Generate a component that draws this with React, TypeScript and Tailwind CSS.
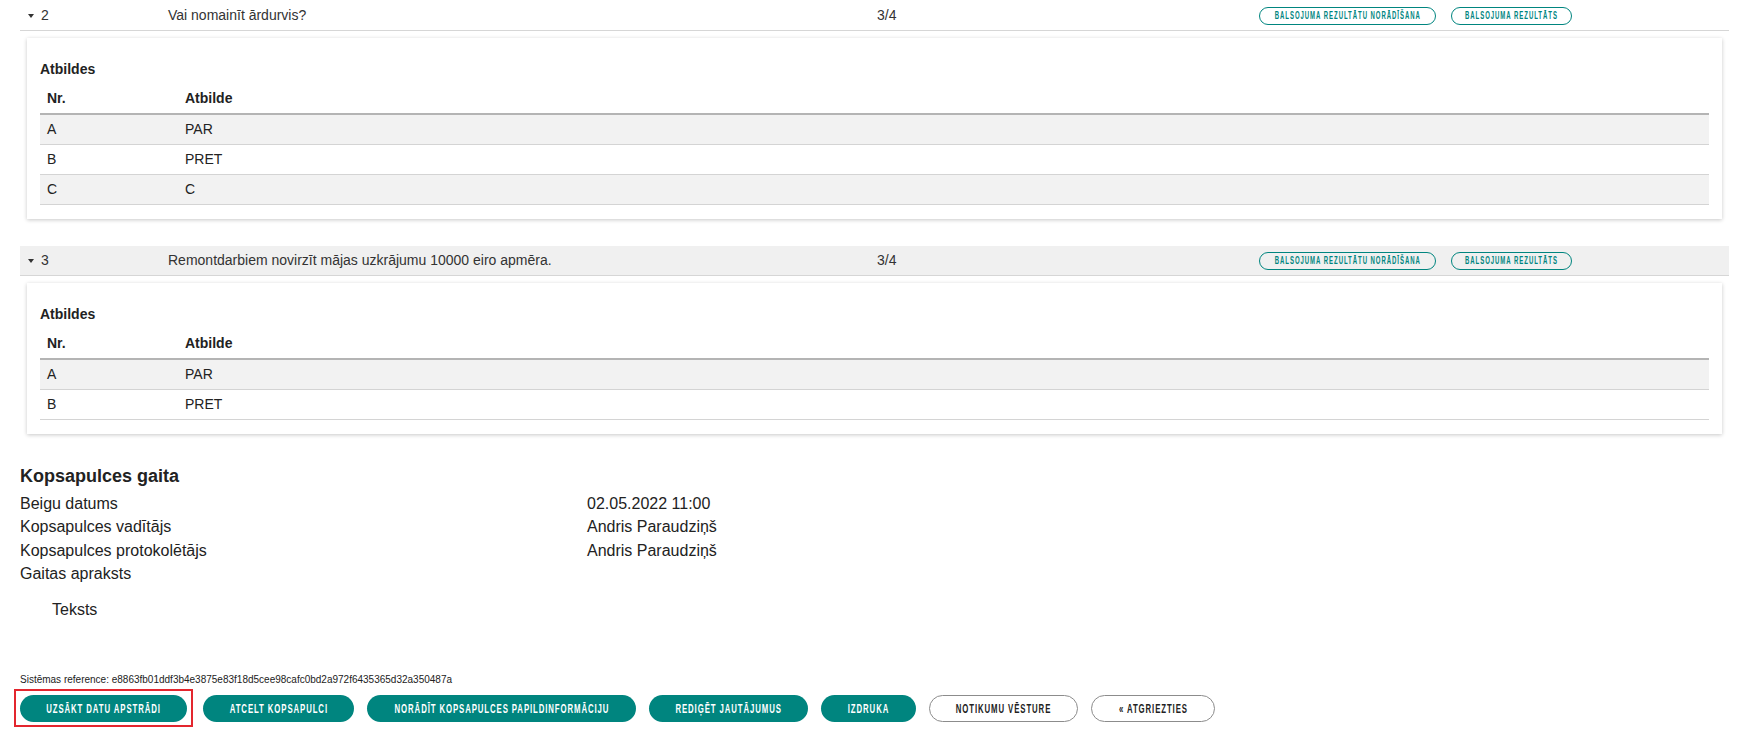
import React from 'react';

type Answer = { nr: string; text: string };

const questions: { nr: string; title: string; votes: string; shaded: boolean; answers: Answer[] }[] = [
  {
    nr: '2',
    title: 'Vai nomainīt ārdurvis?',
    votes: '3/4',
    shaded: false,
    answers: [
      { nr: 'A', text: 'PAR' },
      { nr: 'B', text: 'PRET' },
      { nr: 'C', text: 'C' },
    ],
  },
  {
    nr: '3',
    title: 'Remontdarbiem novirzīt mājas uzkrājumu 10000 eiro apmēra.',
    votes: '3/4',
    shaded: true,
    answers: [
      { nr: 'A', text: 'PAR' },
      { nr: 'B', text: 'PRET' },
    ],
  },
];

function Caret() {
  return (
    <svg width="6" height="4" viewBox="0 0 6 4" className="shrink-0">
      <path d="M0 0h6L3 4z" fill="#333" />
    </svg>
  );
}

// condensed caps label: the picture uses a narrow display face, so squeeze Liberation Sans
function Squeezed({ children }: { children: React.ReactNode }) {
  return (
    <span className="inline-block whitespace-nowrap scale-x-[0.6] origin-center">{children}</span>
  );
}

function PillButton({ label, width }: { label: string; width: string }) {
  return (
    <button
      className={`${width} h-[18px] rounded-full border border-[#00857f] text-[#00857f] text-[10px] font-bold tracking-[1.6px] uppercase leading-none flex items-center justify-center overflow-visible`}
    >
      <Squeezed>{label}</Squeezed>
    </button>
  );
}

function QuestionBlock({ q }: { q: (typeof questions)[number] }) {
  return (
    <div>
      {/* question header row */}
      <div
        className={`grid grid-cols-[148px_709px_382px_1fr] items-center h-[30px] border-b border-[#d6d6d6] text-[14px] text-[#333] ${
          q.shaded ? 'bg-[#f0f0f0]' : 'bg-white'
        }`}
      >
        <div className="flex items-center gap-[7px] pl-[8px]">
          <Caret />
          <span>{q.nr}</span>
        </div>
        <div>{q.title}</div>
        <div>{q.votes}</div>
        <div className="flex items-center gap-[15px]">
          <PillButton label="Balsojuma rezultātu norādīšana" width="w-[177px]" />
          <PillButton label="Balsojuma rezultāts" width="w-[121px]" />
        </div>
      </div>

      {/* answers card */}
      <div className="mx-[7px] mt-[7px] mb-[27px] bg-white shadow-[0_1px_4px_rgba(0,0,0,0.22)] px-[13px] pt-[21px] pb-[14px]">
        <div className="text-[14px] font-bold leading-[20px] text-[#222]">Atbildes</div>
        <div className="mt-[5px] text-[14px] text-[#222]">
          <div className="grid grid-cols-[138px_1fr] h-[31px] items-center border-b-2 border-[#b4b4b4] font-bold px-[7px]">
            <div>Nr.</div>
            <div>Atbilde</div>
          </div>
          {q.answers.map((a, i) => (
            <div
              key={a.nr}
              className={`grid grid-cols-[138px_1fr] h-[30px] items-center border-b border-[#d4d4d4] px-[7px] ${
                i % 2 === 0 ? 'bg-[#f2f2f2]' : 'bg-white'
              }`}
            >
              <div>{a.nr}</div>
              <div>{a.text}</div>
            </div>
          ))}
        </div>
      </div>
    </div>
  );
}

const info = [
  { label: 'Beigu datums', value: '02.05.2022 11:00' },
  { label: 'Kopsapulces vadītājs', value: 'Andris Paraudziņš' },
  { label: 'Kopsapulces protokolētājs', value: 'Andris Paraudziņš' },
  { label: 'Gaitas apraksts', value: '' },
];

const actions: { label: string; width: string; filled: boolean }[] = [
  { label: 'Atcelt kopsapulci', width: 'w-[151px]', filled: true },
  { label: 'Norādīt kopsapulces papildinformāciju', width: 'w-[269px]', filled: true },
  { label: 'Rediģēt jautājumus', width: 'w-[159px]', filled: true },
  { label: 'Izdruka', width: 'w-[95px]', filled: true },
  { label: 'Notikumu vēsture', width: 'w-[149px]', filled: false },
  { label: '« Atgriezties', width: 'w-[124px]', filled: false },
];

function ActionButton({ label, width, filled }: { label: string; width: string; filled: boolean }) {
  return (
    <button
      className={`${width} h-[27px] rounded-full text-[13px] font-bold tracking-[1.5px] uppercase leading-none flex items-center justify-center ${
        filled ? 'bg-[#00857f] text-white' : 'bg-white text-[#222] border border-[#8c8c8c]'
      }`}
    >
      <Squeezed>{label}</Squeezed>
    </button>
  );
}

export default function App() {
  return (
    <div className="min-h-screen bg-white font-['Liberation_Sans',Arial,sans-serif] text-[#222] pl-[20px] pr-[10px] pt-px">
      {questions.map((q) => (
        <QuestionBlock key={q.nr} q={q} />
      ))}

      {/* meeting progress (top margin collapses with the last card's bottom margin) */}
      <div className="mt-[31px]">
        <h2 className="text-[18px] font-bold leading-[22px] text-[#222]">Kopsapulces gaita</h2>
        <div className="mt-[5px] text-[16px] leading-[23.3px] text-[#222]">
          {info.map((row) => (
            <div key={row.label} className="grid grid-cols-[567px_1fr]">
              <div>{row.label}</div>
              <div>{row.value}</div>
            </div>
          ))}
        </div>
        <p className="mt-[13px] pl-[32px] text-[16px] leading-[23px]">Teksts</p>
      </div>

      <div className="mt-[53px] text-[10px] leading-[12px] text-[#222]">
        Sistēmas reference: e8863fb01ddf3b4e3875e83f18d5cee98cafc0bd2a972f6435365d32a350487a
      </div>

      <div className="mt-[3px] flex items-center gap-[13px]">
        <div className="-ml-[6px] -mr-[3px] border-2 border-[#e3262e] px-[4px] pt-[4px] pb-[3px]">
          <ActionButton label="Uzsākt datu apstrādi" width="w-[167px]" filled />
        </div>
        {actions.map((a) => (
          <ActionButton key={a.label} {...a} />
        ))}
      </div>
    </div>
  );
}
